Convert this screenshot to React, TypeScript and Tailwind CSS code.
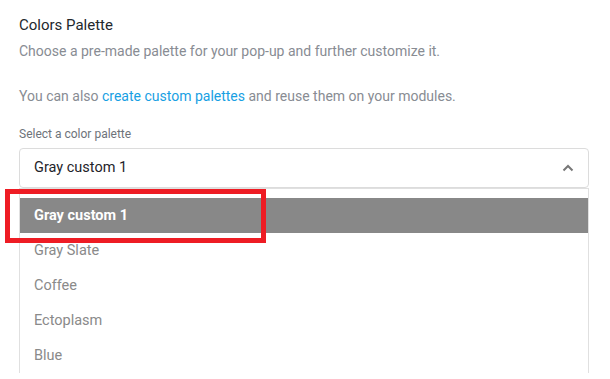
import React from 'react';

const options = ['Gray custom 1', 'Gray Slate', 'Coffee', 'Ectoplasm', 'Blue'];

const ChevronUp = () => (
  <svg width="12" height="8" viewBox="0 0 12 8" fill="none" className="text-[#777]">
    <path d="M1.5 6.5 6 2l4.5 4.5" stroke="currentColor" strokeWidth="2" />
  </svg>
);

const App: React.FC = () => {
  return (
    <div className="w-[610px] h-[379px] overflow-hidden bg-white font-['Roboto',sans-serif]">
      <div className="pl-[19px] pr-[21px] pt-[14px]">
        <h2 className="text-[15px] leading-[22px] text-[#23282d] font-normal">Colors Palette</h2>
        <p className="mt-[5px] text-[14px] leading-[20px] text-[#888c93]">
          Choose a pre-made palette for your pop-up and further customize it.
        </p>
        <p className="mt-[25px] text-[14px] leading-[20px] text-[#888c93]">
          You can also <span className="text-[#17a0e3]">create custom palettes</span> and reuse them on your modules.
        </p>
        <div className="mt-[20px] text-[12px] leading-[16px] text-[#6e737a]">Select a color palette</div>

        <div className="relative mt-[6px]">
          <div className="flex h-[40px] items-center justify-between rounded-[4px] border border-[#dcdcdc] pl-[14px] pr-[14px]">
            <span className="text-[14.5px] text-[#1f242a]">Gray custom 1</span>
            <ChevronUp />
          </div>

          <ul className="border-x border-t border-[#e0e0e0] pt-[9px]">
            {options.map((opt, i) => (
              <li
                key={opt}
                className={`flex h-[35px] items-center pl-[14px] text-[14.5px] ${
                  i === 0 ? 'bg-[#888888] font-bold text-white' : 'text-[#8a8a8a]'
                }`}
              >
                {opt}
              </li>
            ))}
          </ul>

          <div className="absolute left-[-14px] top-[41px] h-[54px] w-[261px] border-[5px] border-[#ee1c24]" />
        </div>
      </div>
    </div>
  );
};

export default App;
